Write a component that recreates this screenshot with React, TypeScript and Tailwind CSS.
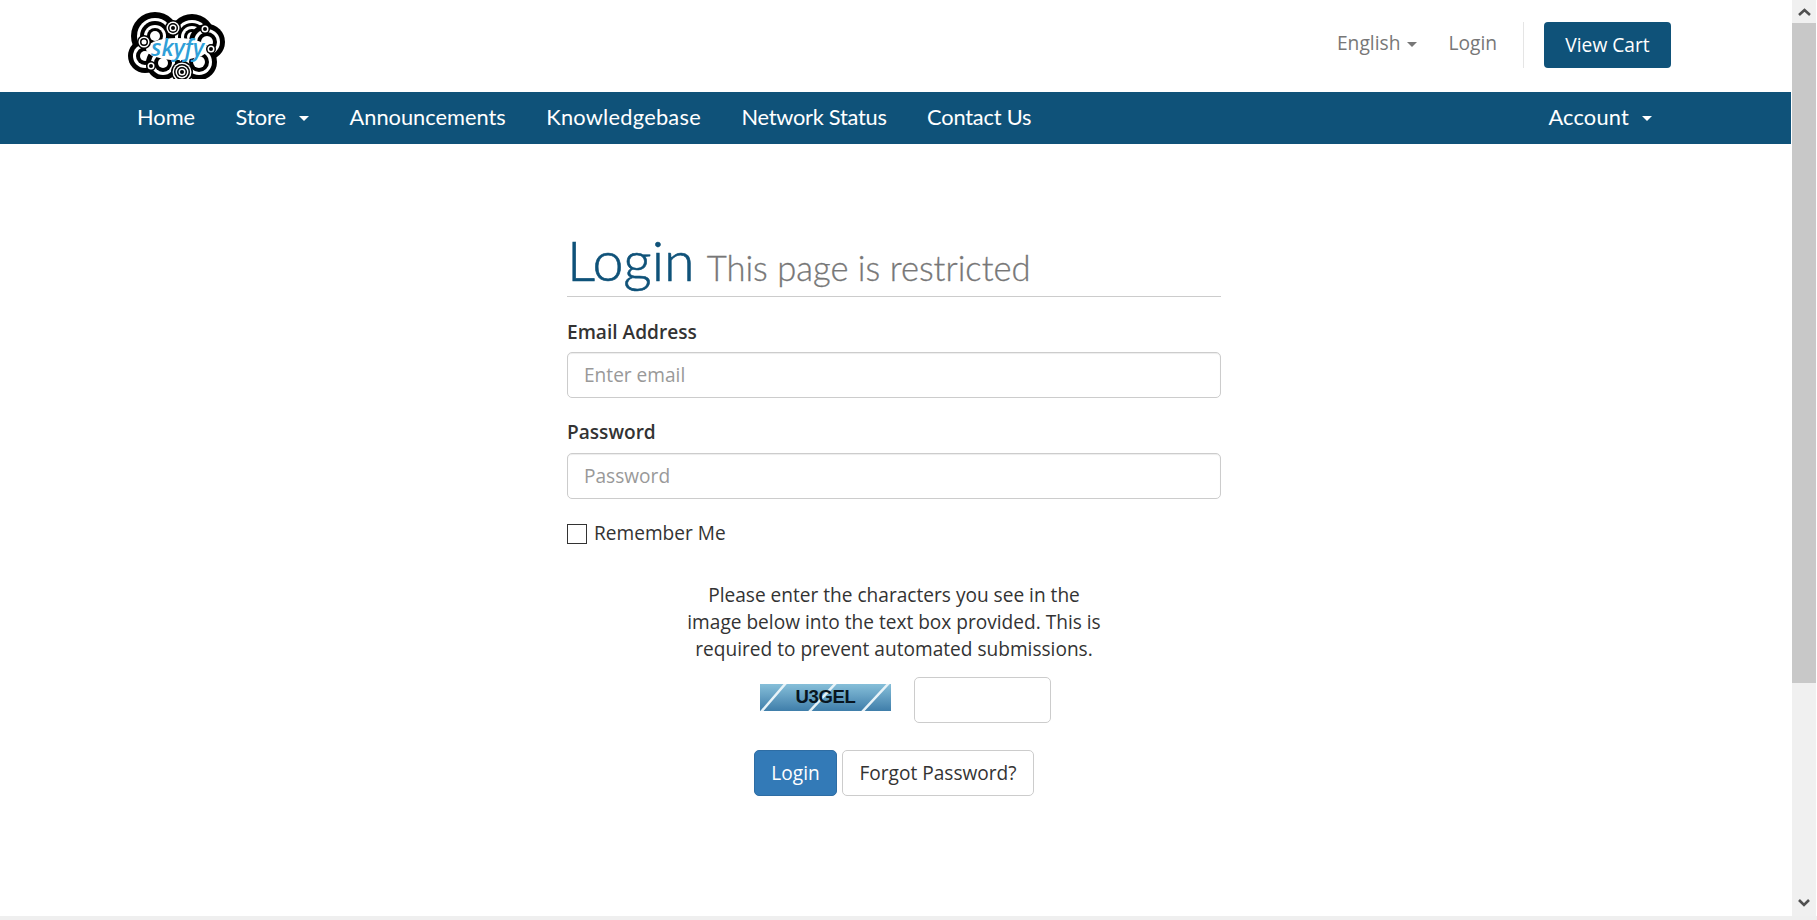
const sans = "font-['Open_Sans','Noto_Sans',sans-serif]";

function Caret({ className }: { className: string }) {
  return <span className={"inline-block w-0 h-0 border-x-[5px] border-x-transparent border-t-[5px] " + className} />;
}

function Lobe({ cx, cy, rs }: { cx: number; cy: number; rs: number[] }) {
  return (
    <g>
      {rs.map((r, i) => (
        <circle key={i} cx={cx} cy={cy} r={r} fill={i % 2 === 0 ? "#000" : "#fff"} />
      ))}
    </g>
  );
}

function Logo() {
  return (
    <div className="relative w-[98px] h-[68px] shrink-0">
      <svg width="98" height="68" viewBox="0 0 98 68">
        <Lobe cx={28} cy={25} rs={[24, 18, 15, 11, 8, 5]} />
        <Lobe cx={65} cy={26} rs={[23, 17, 14, 11, 8, 5]} />
        <Lobe cx={80} cy={31} rs={[18, 13, 10, 6]} />
        <Lobe cx={72} cy={51} rs={[18, 13, 10, 6]} />
        <Lobe cx={18} cy={45} rs={[17, 12, 9, 5]} />
        <Lobe cx={36} cy={52} rs={[17, 12, 9, 5]} />
        <ellipse cx="50" cy="38" rx="31" ry="11" fill="#fff" />
        <Lobe cx={55} cy={61} rs={[11, 9.5, 8, 6.5, 5, 3.5, 2]} />
        <Lobe cx={17} cy={31} rs={[7, 5.5, 4, 2.5]} />
        <Lobe cx={46} cy={17} rs={[8, 6.5, 5, 3.5, 2]} />
        <Lobe cx={78} cy={18} rs={[5, 3.5, 2]} />
        <Lobe cx={24} cy={55} rs={[5, 3.5, 2]} />
        <Lobe cx={84} cy={38} rs={[5, 3.5, 2]} />
        <ellipse cx="51" cy="38" rx="27" ry="8.5" fill="#fff" />
      </svg>
      <span className="absolute left-[24px] top-[22px] text-[23px] leading-[28px] italic font-semibold text-[#2f9fd8] font-['Open_Sans',sans-serif]">skyfy</span>
    </div>
  );
}

function NavItem({ label, caret, extra = "" }: { label: string; caret?: boolean; extra?: string }) {
  return (
    <a className={"flex items-center text-[21.8px] leading-[28px] text-white font-['Lato',sans-serif] " + extra}>
      {label}
      {caret && <Caret className="ml-[13px] mt-[4px] border-t-white" />}
    </a>
  );
}

function Input({ placeholder }: { placeholder: string }) {
  return (
    <input
      placeholder={placeholder}
      className="block w-full h-[46px] px-[16px] pb-[1px] border border-[#ccc] rounded-[5px] bg-white text-[19.1px] placeholder:text-[#999] shadow-[inset_0_1px_1px_rgba(0,0,0,0.075)]"
    />
  );
}

function Captcha() {
  return (
    <div className="relative w-[131px] h-[27px] overflow-hidden bg-gradient-to-b from-[#86bfd9] to-[#3f7eaa] flex items-center justify-center">
      <svg className="absolute inset-0" width="131" height="27" viewBox="0 0 131 27">
        <path d="M1 28 L26 -1 M49 28 L76 -1 M102 28 L129 -1" stroke="#e8f3f8" strokeWidth="2.5" fill="none" />
      </svg>
      <span className="relative text-[18.5px] font-bold text-[#081520] font-['Liberation_Sans',sans-serif] tracking-[-0.3px]">U3GEL</span>
    </div>
  );
}

export default function App() {
  return (
    <div className={"w-[1817px] h-[920px] overflow-hidden flex flex-col bg-white " + sans}>
      <div className="flex flex-1 min-h-0">
        <div className="flex-1 min-w-0 flex flex-col">
          <header className="h-[92px] flex items-center pl-[127px] pr-[121px] pb-[2px]">
            <Logo />
            <div className="ml-auto flex items-center text-[19.2px] text-[#777]">
              <span className="flex items-center mb-[3px]">
                English
                <Caret className="ml-[7px] mt-[2px] border-t-[#777]" />
              </span>
              <span className="ml-[31px] mb-[3px]">Login</span>
              <span className="ml-[26px] w-px h-[46px] bg-[#e5e5e5]" />
              <button className="ml-[20px] w-[127px] h-[46px] rounded-[4px] bg-[#0f5279] text-white text-[19.2px]">View Cart</button>
            </div>
          </header>
          <nav className="h-[52px] mr-px bg-[#0f5279] flex items-center pl-[137px] pr-[139px] pb-[3px] gap-[40.5px]">
            <NavItem label="Home" />
            <NavItem label="Store" caret />
            <NavItem label="Announcements" />
            <NavItem label="Knowledgebase" extra="tracking-[0.25px]" />
            <NavItem label="Network Status" extra="tracking-[-0.25px]" />
            <NavItem label="Contact Us" extra="tracking-[-0.2px]" />
            <div className="ml-auto">
              <NavItem label="Account" caret extra="tracking-[0.2px]" />
            </div>
          </nav>
          <main className="pl-[567px] pt-[90px]">
            <div className="w-[654px] text-[#333]">
              <div className="h-[63px] border-b border-[#ccc] flex items-baseline font-['Lato',sans-serif]">
                <h1 className="text-[55.6px] leading-[52px] font-light text-[#0f5279] [-webkit-text-stroke:0.6px_#0f5279]">Login</h1>
                <span className="ml-[12px] text-[34.6px] font-light text-[#777] [-webkit-text-stroke:0.3px_#777]">This page is restricted</span>
              </div>
              <label className="block mt-[20px] mb-[5px] text-[19.1px] leading-[30px] font-semibold">Email Address</label>
              <Input placeholder="Enter email" />
              <label className="block mt-[19px] mb-[6px] text-[19.1px] leading-[30px] font-semibold">Password</label>
              <Input placeholder="Password" />
              <div className="flex items-center mt-[21px] text-[19.1px] leading-[27px]">
                <span className="w-[20px] h-[20px] mt-[1px] border border-[#333] bg-white" />
                <span className="ml-[7px]">Remember Me</span>
              </div>
              <div className="w-[420px] mx-auto mt-[35px] text-center text-[19.1px] leading-[27px]">
                Please enter the characters you see in the image below into the text box provided. This is required to prevent automated submissions.
              </div>
              <div className="flex items-center justify-center mt-[14px] gap-[23px] pl-[23px]">
                <div className="mb-[6px]"><Captcha /></div>
                <div className="w-[137px] h-[46px] border border-[#ccc] rounded-[5px] bg-white" />
              </div>
              <div className="flex justify-center gap-[5px] mt-[27px] text-[19.1px]">
                <button className="h-[46px] w-[83px] rounded-[5px] bg-[#337ab7] border border-[#2e6da4] text-white">Login</button>
                <button className="h-[46px] w-[192px] rounded-[5px] bg-white border border-[#ccc] text-[#333]">Forgot Password?</button>
              </div>
            </div>
          </main>
        </div>
        <div className="w-[25px] shrink-0 border-r border-white bg-[#f0f0f0] flex flex-col items-center justify-between">
          <div className="w-full">
            <div className="h-[23px] flex items-center justify-center">
              <svg width="13" height="8" viewBox="0 0 13 8"><path d="M1 7 L6.5 2 L12 7" stroke="#505050" strokeWidth="2.6" fill="none" /></svg>
            </div>
            <div className="h-[660px] bg-[#c8c8c8]" />
          </div>
          <div className="h-[26px] flex items-center justify-center">
            <svg width="12" height="8" viewBox="0 0 12 8"><path d="M1 1 L6 6 L11 1" stroke="#505050" strokeWidth="2.6" fill="none" /></svg>
          </div>
        </div>
      </div>
      <div className="h-[4px] bg-[#efefef] shrink-0" />
    </div>
  );
}
